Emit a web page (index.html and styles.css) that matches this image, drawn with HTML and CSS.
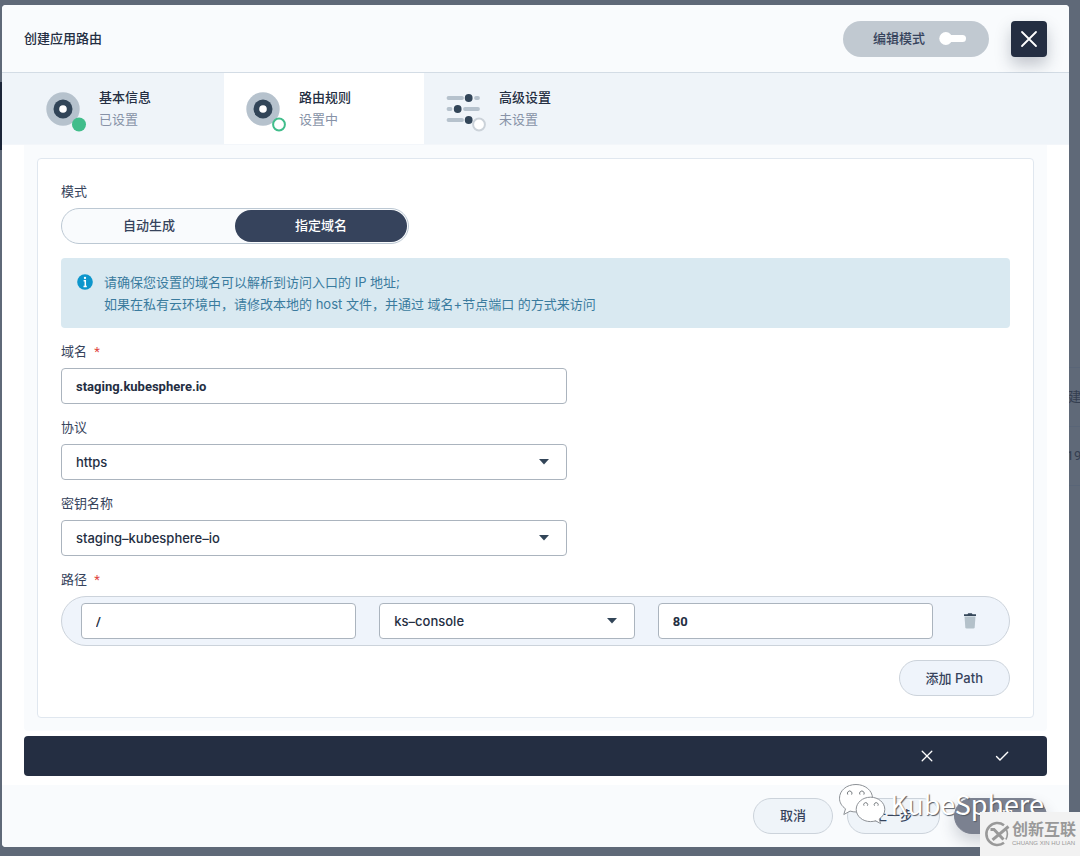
FILE: index.html
```html
<!DOCTYPE html>
<html lang="zh-CN">
<head>
<meta charset="utf-8">
<meta name="viewport" content="width=device-width, initial-scale=1">
<title>创建应用路由</title>
<link rel="stylesheet" href="styles.css">
</head>
<body>
<div class="backdrop" aria-hidden="true">
  <span class="backdrop-nav"></span>
  <div class="backdrop-list">
    <span class="backdrop-row">创建</span>
    <span class="backdrop-row">2019</span>
    <span class="backdrop-row"></span>
  </div>
</div>

<main class="modal">
  <header class="modal-header">
    <h1 class="modal-title">创建应用路由</h1>
    <button class="mode-button" type="button">编辑模式
      <svg width="27" height="14" viewBox="0 0 27 14"><rect x="6" y="3" width="21" height="7" rx="3.5" fill="#fff"/><circle cx="6.800" cy="6.500" r="6.500" fill="#fff"/></svg>
    </button>
    <button class="close-button" type="button" aria-label="关闭">
      <svg width="18" height="18" viewBox="0 0 18 18"><path d="M2 2l14 14M16 2L2 16" stroke="#fff" stroke-width="1.8" stroke-linecap="round"/></svg>
    </button>
  </header>

  <nav class="steps">
    <button class="step" type="button">
      <svg class="step-icon" width="42" height="42" viewBox="0 0 42 42"><circle cx="17" cy="18" r="16.700" fill="#b6c2cd"/><circle cx="17" cy="18" r="9.500" fill="#324558"/><circle cx="17" cy="18" r="3.800" fill="#fff"/><circle cx="33" cy="33.500" r="7" fill="#41bd8b"/></svg>
      <span class="step-text"><strong>基本信息</strong><span>已设置</span></span>
    </button>
    <button class="step step-current" type="button" aria-current="step">
      <svg class="step-icon" width="42" height="42" viewBox="0 0 42 42"><circle cx="17" cy="18" r="16.700" fill="#b6c2cd"/><circle cx="17" cy="18" r="9.500" fill="#324558"/><circle cx="17" cy="18" r="3.800" fill="#fff"/><circle cx="33" cy="33.500" r="5.900" fill="#fff" stroke="#41bd8b" stroke-width="2"/></svg>
      <span class="step-text"><strong>路由规则</strong><span>设置中</span></span>
    </button>
    <button class="step" type="button">
      <svg class="step-icon" width="42" height="42" viewBox="0 0 42 42"><path d="M2.500 7H16M30 7H32M2.500 18H4.500M19 18H32M2.500 29H16" stroke="#b6c2cd" stroke-width="3.800" stroke-linecap="round"/><circle cx="22.700" cy="7" r="3.900" fill="#324558"/><circle cx="11.700" cy="18" r="3.900" fill="#324558"/><circle cx="22.700" cy="29" r="3.900" fill="#324558"/><circle cx="33" cy="33.500" r="5.900" fill="#fff" stroke="#cbd2d9" stroke-width="2"/></svg>
      <span class="step-text"><strong>高级设置</strong><span>未设置</span></span>
    </button>
  </nav>

  <div class="modal-body">
    <div class="panel">
      <form class="card" id="rule-form">
        <div class="field">
          <span class="label" id="mode-label">模式</span>
          <div class="segmented" role="group" aria-labelledby="mode-label">
            <button class="segment" type="button" aria-pressed="false">自动生成</button>
            <button class="segment segment-on" type="button" aria-pressed="true">指定域名</button>
          </div>
        </div>

        <div class="notice">
          <svg class="notice-icon" width="16" height="16" viewBox="0 0 16 16"><circle cx="8" cy="8" r="7.800" fill="#0d96cc"/><circle cx="8" cy="4" r="1.150" fill="#fff"/><path d="M6.600 6.800H8.300V12.500M6.500 12.500H9.800" fill="none" stroke="#fff" stroke-width="1.500"/></svg>
          <p>请确保您设置的域名可以解析到访问入口的 IP 地址;<br>如果在私有云环境中，请修改本地的 host 文件，并通过 域名+节点端口 的方式来访问</p>
        </div>

        <div class="field field-half">
          <label class="label" for="host">域名 <span class="required">*</span></label>
          <input class="control" id="host" type="text" value="staging.kubesphere.io">
        </div>

        <div class="field field-half">
          <label class="label" for="protocol">协议</label>
          <div class="select-box">
            <select class="control" id="protocol"><option>https</option><option>http</option></select>
            <svg class="caret" width="10" height="6" viewBox="0 0 10 6"><path d="M0 0H10L5 5.500Z" fill="#324558"/></svg>
          </div>
        </div>

        <div class="field field-half">
          <label class="label" for="secret">密钥名称</label>
          <div class="select-box">
            <select class="control" id="secret"><option>staging–kubesphere–io</option></select>
            <svg class="caret" width="10" height="6" viewBox="0 0 10 6"><path d="M0 0H10L5 5.500Z" fill="#324558"/></svg>
          </div>
        </div>

        <div class="field">
          <label class="label" for="path">路径 <span class="required">*</span></label>
          <div class="path-row">
            <input class="control" id="path" type="text" value="/">
            <div class="select-box">
              <select class="control" aria-label="服务"><option>ks–console</option></select>
              <svg class="caret" width="10" height="6" viewBox="0 0 10 6"><path d="M0 0H10L5 5.500Z" fill="#324558"/></svg>
            </div>
            <input class="control" type="text" value="80" aria-label="端口">
            <button class="delete-button" type="button" aria-label="删除">
              <svg width="14" height="16" viewBox="0 0 14 16"><path d="M1.500 3.500H12.500L11.700 14.200Q11.600 15.500 10.300 15.500H3.700Q2.400 15.500 2.300 14.200Z" fill="#b4c1ca"/><path d="M1 1.200H4.500L5.200.3H8.800L9.500 1.200H13V2.900H1Z" fill="#35475a"/></svg>
            </button>
          </div>
        </div>

        <button class="pill-button add-button" type="button">添加 Path</button>
      </form>
    </div>

    <div class="confirm-bar">
      <button class="confirm-button" type="button" aria-label="取消规则">
        <svg width="12" height="12" viewBox="0 0 12 12"><path d="M1.200 1.200l9.600 9.600M10.800 1.200l-9.600 9.600" stroke="#fff" stroke-width="1.300" stroke-linecap="round"/></svg>
      </button>
      <button class="confirm-button" type="button" aria-label="确认规则">
        <svg width="14" height="12" viewBox="0 0 14 12"><path d="M1.500 6.500l3.500 3.500L12.700 2.300" fill="none" stroke="#fff" stroke-width="1.400" stroke-linecap="round"/></svg>
      </button>
    </div>
  </div>

  <footer class="modal-footer">
    <button class="pill-button" type="button">取消</button>
    <button class="pill-button" type="button">上一步</button>
    <button class="pill-button pill-disabled" type="button">创建</button>
  </footer>
</main>

<div class="channel-mark">
  <svg width="50" height="42" viewBox="0 0 50 42">
    <g fill="#fff" stroke="#8d9196" stroke-width="1">
      <path d="M18 1.500C8.500 1.500 1.500 7.600 1.500 15.200c0 4.400 2.300 8 6 10.600L5.800 31.500l6.300-3.400c2 .6 4 .9 6.300.9C27.500 29 34.500 23 34.500 15.200S27 1.500 18 1.500Z"/>
      <path d="M32.500 14.200c-8 0-14.300 5.500-14.300 12.200s6.300 12.200 14.300 12.200c1.900 0 3.500-.3 5.100-.8l5 2.800-1.400-4.600c3.500-2.300 5.600-5.700 5.600-9.600 0-6.700-6.300-12.200-14.300-12.200Z"/>
      <path d="M9.800 11.600a2.300 2.300 0 1 1 3.800 0M22 11.600a2.300 2.300 0 1 1 3.800 0M26 22.700a2 2 0 1 1 3.400 0M36.500 22.700a2 2 0 1 1 3.400 0" fill="none" stroke="#777c80"/>
    </g>
  </svg>
  <span>KubeSphere</span>
</div>

<div class="site-mark">
  <svg width="26" height="26" viewBox="0 0 26 26"><g fill="none" stroke="#999"><path d="M20 4.200A11 11 0 1 0 20 21.800" stroke-width="2.600"/><path d="M21.800 7.500A11 11 0 0 1 21.800 18.500" stroke-width="1.600"/><path d="M6.500 8.500H10L19.500 18.500" stroke-width="3"/><path d="M24.500 5.500L8.500 18.800" stroke-width="3"/></g></svg>
  <div class="site-name"><strong>创新互联</strong><small>CHUANG XIN HU LIAN</small></div>
</div>
</body>
</html>
```
FILE: styles.css
```css
* { box-sizing: border-box; }

body {
  margin: 0;
  min-height: 100vh;
  padding: 5px 11px 9px 2px;
  display: flex;
  position: relative;
  overflow-x: hidden;
  background: #5f6978;
  color: #242e42;
  font: 13px/20px Roboto, "Noto Sans CJK SC", sans-serif;
}

button, input, select {
  margin: 0;
  border: 0;
  font: inherit;
  color: inherit;
}
button { padding: 0; background: none; cursor: pointer; }
svg { display: block; flex: none; }

/* Page behind the dialog */
.backdrop { position: absolute; inset: 0; overflow: hidden; }
.backdrop-nav { position: absolute; left: 0; top: 82px; width: 4px; height: 68px; background: #1b2538; }
.backdrop-list { position: absolute; right: 0; top: 367px; width: 28px; display: grid; }
.backdrop-row {
  height: 59px;
  display: flex;
  align-items: center;
  justify-content: flex-end;
  border-top: 1px solid #596577;
  color: #343e50;
}

.modal {
  position: relative;
  flex: 1;
  min-width: 0;
  display: flex;
  flex-direction: column;
  overflow: hidden;
  border-radius: 4px;
  background: #fff;
}

.modal-header {
  display: flex;
  align-items: center;
  gap: 22px;
  padding: 16px 22px 15px;
  border-bottom: 1px solid #d3dce5;
  background: #f9fbfd;
}
.modal-title { margin: 0 auto 0 0; font-size: 13px; line-height: 20px; font-weight: 500; }
.mode-button {
  height: 36px;
  padding: 0 23px 0 30px;
  display: flex;
  align-items: center;
  gap: 14px;
  border-radius: 18px;
  background: #c1c9d1;
  color: #36435c;
  font-weight: 500;
}
.close-button {
  width: 36px;
  height: 36px;
  display: grid;
  place-items: center;
  border-radius: 4px;
  background: #242e42;
  box-shadow: 0 8px 16px rgba(36, 46, 66, 0.26);
}

.steps { display: flex; background: #eff4f9; border-bottom: 1px solid #f3f6fa; }
.step {
  width: 200px;
  height: 71px;
  padding: 0 0 0 22px;
  display: flex;
  align-items: center;
  gap: 11px;
  text-align: left;
}
.step:first-child { width: 222px; padding-left: 44px; }
.step-current { background: #fff; }
.step-icon { margin-top: 6px; }
.step-text { display: grid; gap: 2px; color: #8792a7; }
.step-text strong { color: #242e42; font-weight: 500; }

.modal-body { flex: 1; padding: 0 22px 9px; }
.panel { padding: 13px; background: #f9fbfd; border-radius: 0 0 4px 4px; }
.card {
  padding: 23px 23px 21px;
  display: flex;
  flex-direction: column;
  gap: 14px;
  border: 1px solid #e0e7ef;
  border-radius: 4px;
  background: #fff;
}
.field { display: grid; gap: 6px; }
.field-half { width: 53.3%; }
.label { color: #36435c; }
.required { margin-left: 4px; color: #e0443e; }

.segmented {
  width: 348px;
  height: 36px;
  padding: 1px;
  display: grid;
  grid-template-columns: 1fr 1fr;
  border: 1px solid #bcc8d3;
  border-radius: 18px;
  background: #f9fbfd;
}
.segment { border-radius: 16px; color: #36435c; font-weight: 500; }
.segment-on { background: #36435c; color: #fff; }

.notice {
  padding: 13px 16px;
  display: flex;
  gap: 11px;
  border-radius: 4px;
  background: #d9e9f1;
  color: #3a7b9e;
  font-family: Inter, "Noto Sans CJK SC", sans-serif;
}
.notice-icon { margin-top: 3px; }
.notice p { margin: 0; line-height: 22px; }

.control {
  width: 100%;
  min-width: 0;
  height: 36px;
  padding: 0 14px;
  border: 1px solid #abb4be;
  border-radius: 4px;
  background: #fff;
  color: #242e42;
  font-weight: 700;
}
.select-box { display: grid; align-items: center; }
.select-box > * { grid-area: 1 / 1; }
select.control { appearance: none; font-family: Inter, sans-serif; font-weight: 500; }
.caret { justify-self: end; margin-right: 18px; pointer-events: none; }

.path-row {
  padding: 6px 25px 6px 19px;
  display: grid;
  grid-template-columns: 276fr 256fr 276fr 28px;
  gap: 23px;
  border: 1px solid #ccd3db;
  border-radius: 25px;
  background: #eff4fb;
}
.delete-button { display: grid; place-items: center; }

.pill-button {
  height: 36px;
  padding: 0 26px;
  border: 1px solid #ccd3db;
  border-radius: 18px;
  background: #eff4f9;
  color: #36435c;
  font-weight: 500;
}
.add-button { align-self: flex-end; background: #eff4fb; font-family: Inter, "Noto Sans CJK SC", sans-serif; }
.pill-disabled { width: 93px; border-color: #7b8190; background: #7b8190; color: #fff; box-shadow: 0 8px 16px rgba(36, 46, 66, 0.2); }

.confirm-bar {
  margin-top: 5px;
  height: 40px;
  padding: 0 8px;
  display: flex;
  justify-content: flex-end;
  border-radius: 4px;
  background: #242e42;
}
.confirm-button { width: 75px; display: grid; place-items: center; }

.modal-footer {
  padding: 13px 22px;
  display: flex;
  justify-content: flex-end;
  gap: 14px;
  background: #f9fbfd;
}

/* Marks laid over the page corner */
.channel-mark {
  position: absolute;
  right: 36px;
  bottom: 31px;
  display: flex;
  align-items: center;
  gap: 2px;
  color: #fff;
  font: 400 27px/38px "Noto Sans CJK SC", sans-serif;
  text-shadow: 1px 1px 1px #555c66;
  pointer-events: none;
}
.site-mark {
  position: absolute;
  right: 0;
  bottom: 0;
  width: 100px;
  height: 44px;
  display: flex;
  align-items: center;
  justify-content: center;
  gap: 2px;
  background: #f2f2f2;
  color: #999;
}
.site-name { display: grid; white-space: nowrap; }
.site-name strong { font-size: 16px; line-height: 18px; }
.site-name small { font: 6px/8px "Liberation Sans", sans-serif; }
```
